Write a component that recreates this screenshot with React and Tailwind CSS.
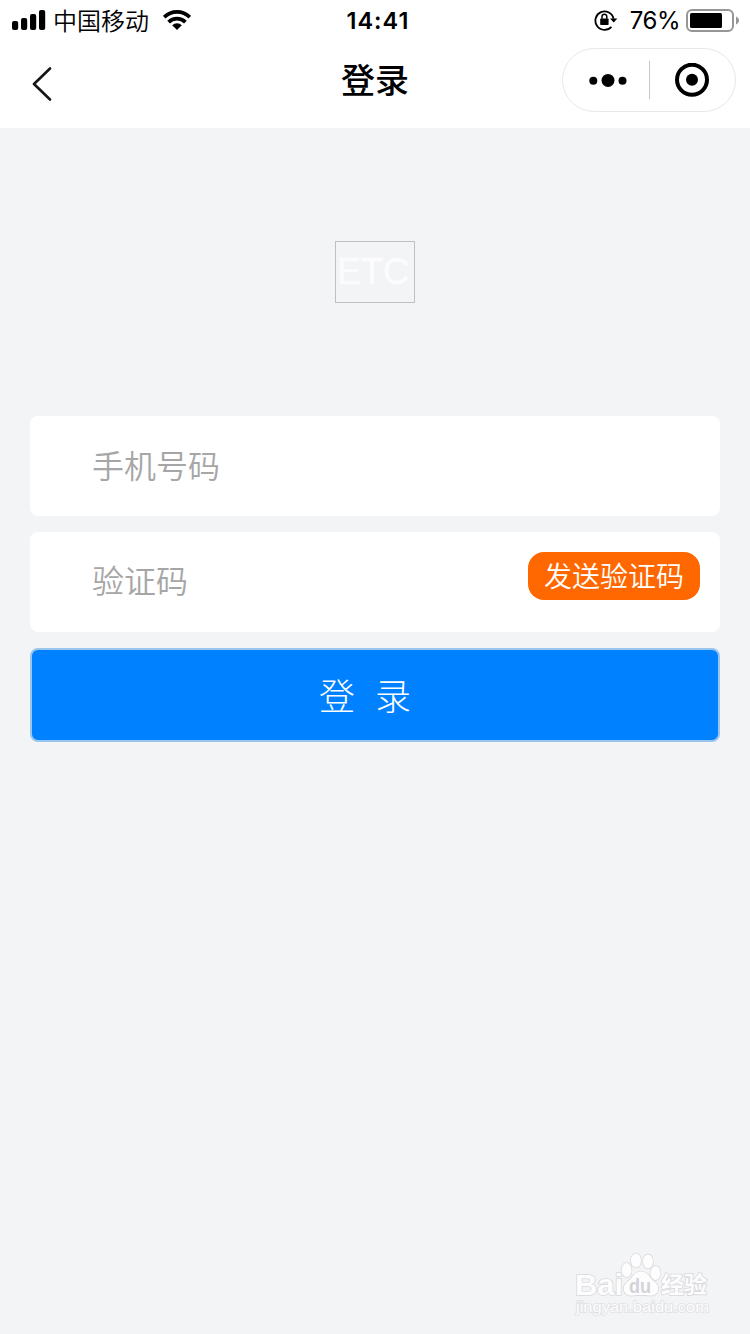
import React, { useState } from "react";

function SignalIcon() {
  return (
    <svg width="34" height="20" viewBox="0 0 34 20" className="shrink-0">
      <rect x="0" y="11" width="6.2" height="9" rx="2" />
      <rect x="9" y="8" width="6.2" height="12" rx="2" />
      <rect x="18" y="4" width="6.2" height="16" rx="2" />
      <rect x="27" y="0" width="6.2" height="20" rx="2" />
    </svg>
  );
}

function WifiIcon() {
  return (
    <svg width="28" height="20" viewBox="0 0 28 20" className="shrink-0">
      <g fill="none" stroke="#000" strokeWidth="3.8">
        <path d="M1.2 7.2a18.2 18.2 0 0 1 25.6 0" />
        <path d="M5.6 12.2a11.8 11.8 0 0 1 16.8 0" />
      </g>
      <path d="M14 20l-4.8-4.7a6.8 6.8 0 0 1 9.6 0z" />
    </svg>
  );
}

function RotationLockIcon() {
  return (
    <svg width="24" height="22" viewBox="0 0 24 22" className="shrink-0">
      <path
        d="M17.4 17.8A9.2 9.2 0 1 1 19.6 9.8"
        fill="none"
        stroke="#000"
        strokeWidth="1.8"
      />
      <path d="M16 9.4h7.4l-3.7 4.2z" />
      <rect x="6.2" y="9.4" width="8.4" height="6.6" rx="0.8" />
      <path
        d="M8 9.8V7.6a2.4 2.4 0 0 1 4.8 0v2.2"
        fill="none"
        stroke="#000"
        strokeWidth="1.5"
      />
    </svg>
  );
}

function BatteryIcon() {
  return (
    <svg width="54" height="24" viewBox="0 0 54 24" className="shrink-0">
      <rect
        x="1"
        y="2"
        width="46"
        height="21"
        rx="5"
        fill="#fff"
        stroke="#969696"
        strokeWidth="2"
      />
      <rect x="4" y="5" width="32" height="15" rx="1.5" />
      <path d="M50 8.5c4 1.5 4 6.5 0 8z" fill="#969696" />
    </svg>
  );
}

function StatusBar() {
  return (
    <div className="grid h-10 grid-cols-[1fr_auto_1fr] items-center pl-3 pr-[10px] text-2xl leading-6">
      <div className="flex items-center">
        <SignalIcon />
        <span className="ml-[7px] font-[350]">中国移动</span>
        <span className="ml-[14px]">
          <WifiIcon />
        </span>
      </div>
      <span className="ml-1 mt-px font-['Inter'] text-[23.5px] font-semibold tracking-[1px]">
        14:41
      </span>
      <div className="flex items-center justify-end">
        <RotationLockIcon />
        <span className="ml-3 mt-px font-['Inter'] text-[24px] tracking-[-0.5px]">
          76%
        </span>
        <span className="ml-[6px]">
          <BatteryIcon />
        </span>
      </div>
    </div>
  );
}

function NavBar() {
  return (
    <div className="grid h-[88px] grid-cols-[1fr_auto_1fr] items-start pl-8 pr-[14px]">
      <button aria-label="返回" className="mt-[27px] w-5">
        <svg width="20" height="34" viewBox="0 0 20 34">
          <path
            d="M18 1.5L2 17l16 15.5"
            fill="none"
            stroke="#161616"
            strokeWidth="2.6"
            strokeLinecap="round"
            strokeLinejoin="round"
          />
        </svg>
      </button>
      <h1 className="mr-[18px] mt-[21px] text-[34px] font-medium leading-9">
        登录
      </h1>
      <div className="mt-2 flex h-16 w-[174px] items-center justify-self-end rounded-full border border-[#e8e8e8]">
        <button aria-label="更多" className="flex w-[86px] justify-center">
          <svg width="38" height="14" viewBox="0 0 38 14" className="ml-[3px]">
            <circle cx="4.3" cy="7.8" r="4" />
            <circle cx="19" cy="7.4" r="6.5" />
            <circle cx="33.5" cy="7.8" r="4" />
          </svg>
        </button>
        <span className="h-[38px] w-px bg-[#c8c8c8]" />
        <button aria-label="关闭" className="flex flex-1 justify-center">
          <svg width="34" height="34" viewBox="0 0 34 34" className="mr-px">
            <circle
              cx="17"
              cy="16.7"
              r="15"
              fill="none"
              stroke="#000"
              strokeWidth="4"
            />
            <circle cx="17" cy="16.7" r="6" />
          </svg>
        </button>
      </div>
    </div>
  );
}

function Watermark() {
  return (
    <svg
      width="150"
      height="74"
      viewBox="0 0 150 74"
      className="absolute bottom-[10px] right-[30px]"
      fill="#fdfdfe"
      stroke="#d8d9db"
      strokeWidth="1.6"
      paintOrder="stroke"
    >
      <text
        x="5"
        y="45"
        fontSize="30"
        fontWeight="700"
        textLength="48"
        lengthAdjust="spacingAndGlyphs"
        fontFamily="'Liberation Sans', sans-serif"
      >
        Bai
      </text>
      <ellipse cx="56.5" cy="20" rx="5" ry="7" />
      <ellipse cx="66" cy="10.5" rx="5" ry="7" />
      <ellipse cx="78" cy="11.5" rx="5" ry="7" />
      <ellipse cx="85.5" cy="23" rx="5" ry="7" />
      <path d="M71 21.5c6 0 8 5 12 9 4 3 6 6 5 10-1 4-5 5.500-9 5-5-.6-11-.6-16 0-4 .5-8-1-9-5-1-4 1-7 5-10 4-4 6-9 12-9z" />
      <text
        x="59"
        y="43"
        fontSize="20"
        fontWeight="700"
        textLength="22"
        lengthAdjust="spacingAndGlyphs"
        fill="#d2d3d5"
        stroke="none"
        fontFamily="'Liberation Sans', sans-serif"
      >
        du
      </text>
      <text
        x="91"
        y="43"
        fontSize="23"
        fontWeight="700"
        textLength="46"
        fontFamily="'Noto Sans CJK SC', sans-serif"
      >
        经验
      </text>
      <text
        x="6"
        y="62"
        fontSize="15"
        textLength="133"
        lengthAdjust="spacingAndGlyphs"
        stroke="#e0e1e3"
        fontFamily="'Liberation Sans', sans-serif"
      >
        jingyan.baidu.com
      </text>
    </svg>
  );
}

export default function App() {
  const [phone, setPhone] = useState("");
  const [code, setCode] = useState("");

  return (
    <div className="relative h-[1334px] w-[750px] overflow-hidden bg-[#f3f4f6] font-['Noto_Sans_CJK_SC',sans-serif] text-black">
      <header className="h-32 bg-white">
        <StatusBar />
        <NavBar />
      </header>

      <main className="flex flex-col px-[30px]">
        <div className="mt-[113px] flex h-[62px] w-20 items-center self-center border border-[#bfc0c2] pl-px font-['Liberation_Sans'] text-[36px] text-[#fcfcfd] [-webkit-text-stroke:0.6px_#fcfcfd]">
          ETC
        </div>

        <form
          className="mt-[113px] flex flex-col gap-4"
          onSubmit={(e) => e.preventDefault()}
        >
          <div className="flex h-[100px] items-center rounded-lg bg-white px-[62px] pb-[5px]">
            <input
              type="tel"
              name="phone"
              placeholder="手机号码"
              value={phone}
              onChange={(e) => setPhone(e.target.value)}
              className="w-full text-[32px] font-[350] outline-none placeholder:text-[#a6a6a6]"
            />
          </div>
          <div className="flex h-[100px] items-start rounded-lg bg-white pl-[62px] pr-5 pt-5">
            <input
              type="text"
              name="code"
              placeholder="验证码"
              value={code}
              onChange={(e) => setCode(e.target.value)}
              className="mt-[3px] h-12 min-w-0 flex-1 text-[32px] font-[350] outline-none placeholder:text-[#a6a6a6]"
            />
            <button
              type="button"
              className="h-12 w-[172px] rounded-2xl bg-[#ff6700] pb-0.5 text-[28px] font-[350] leading-[46px] text-white"
            >
              发送验证码
            </button>
          </div>
          <button className="h-[94px] rounded-lg border-2 border-[#99c5ee] bg-[#0081ff] pb-[3px] text-[36px] font-light tracking-[20px] text-white">
            登录
          </button>
        </form>
      </main>

      <Watermark />
    </div>
  );
}
